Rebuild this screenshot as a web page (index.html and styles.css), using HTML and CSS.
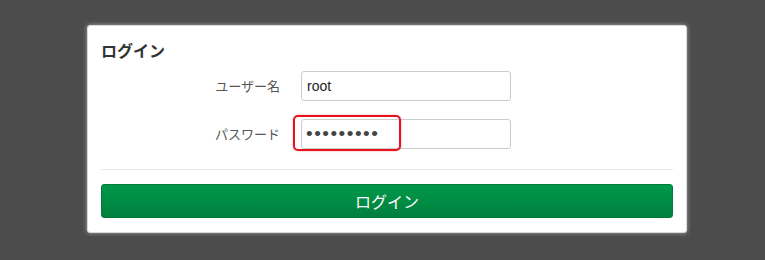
FILE: index.html
```html
<!DOCTYPE html>
<html lang="ja">
<head>
<meta charset="utf-8">
<link rel="stylesheet" href="styles.css">
</head>
<body>
<div class="card">
  <h1 class="title">ログイン</h1>
  <div class="row">
    <label class="label">ユーザー名</label>
    <div class="field"><input class="input" type="text" value="root"></div>
  </div>
  <div class="row">
    <label class="label">パスワード</label>
    <div class="field">
      <input class="input" type="password" value="aaaaaaaaa">
      <span class="highlight"></span>
    </div>
  </div>
  <hr class="divider">
  <button class="btn">ログイン</button>
</div>
</body>
</html>
```

FILE: styles.css
```css
html, body {
  margin: 0;
  padding: 0;
  background: #4c4c4c;
  width: 765px;
  height: 260px;
  overflow: hidden;
  font-family: "Liberation Sans", "Noto Sans CJK JP", sans-serif;
}
body {
  padding-top: 25px;
  padding-left: 87px;
  box-sizing: border-box;
}
.card {
  width: 600px;
  height: 208px;
  box-sizing: border-box;
  background: #fff;
  border: 1px solid #d8d8d8;
  border-radius: 3px;
  box-shadow: 0 0 4px rgba(255,255,255,0.5);
  padding: 13px 13px 0 13px;
}
.title {
  margin: 0;
  font-size: 16px;
  line-height: 22px;
  font-weight: bold;
  color: #333;
  padding-top: 2px;
}
.row {
  display: grid;
  grid-template-columns: 179px 209px;
  column-gap: 21px;
  align-items: center;
  margin-top: 8px;
}
.row + .row {
  margin-top: 18px;
}
.label {
  text-align: right;
  font-size: 13px;
  color: #555;
  padding-bottom: 1px;
}
.field {
  position: relative;
  height: 30px;
}
.input {
  display: block;
  width: 210px;
  height: 30px;
  box-sizing: border-box;
  border: 1px solid #ccc;
  border-radius: 3px;
  padding: 0 5px;
  font-family: "Liberation Sans", sans-serif;
  font-size: 14px;
  color: #222;
  background: #fff;
  margin: 0;
}
.input[type="password"] {
  font-size: 19px;
  letter-spacing: 1.5px;
  color: #444;
  padding-left: 4px;
}
.highlight {
  position: absolute;
  left: -8px;
  top: -4px;
  width: 108px;
  height: 36px;
  box-sizing: border-box;
  border: 2px solid #e8121e;
  border-radius: 5px;
  box-shadow: 0 0 2px rgba(200,0,0,0.4);
}
.divider {
  border: 0;
  border-top: 1px solid #e8e8e8;
  margin: 20px 0 14px 0;
}
.btn {
  display: block;
  width: 572px;
  height: 34px;
  border: 1px solid #007a3a;
  border-radius: 3px;
  background: linear-gradient(#00994b, #007f3d);
  color: #fff;
  font-family: "Liberation Sans", "Noto Sans CJK JP", sans-serif;
  font-size: 16px;
  padding: 0;
}
```
